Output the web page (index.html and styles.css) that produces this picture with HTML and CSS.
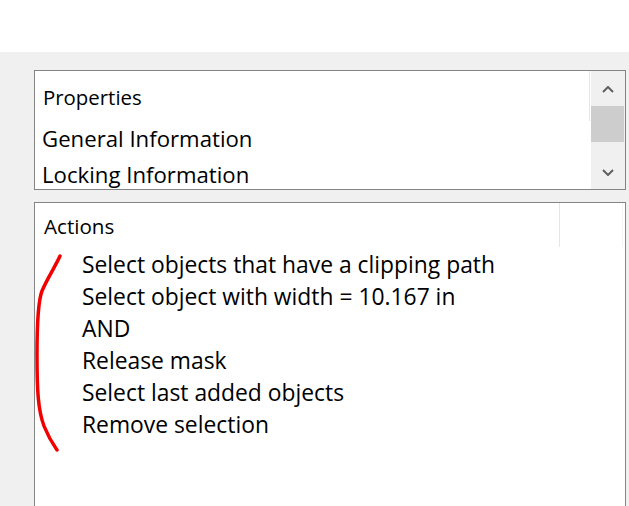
FILE: index.html
```html
<!DOCTYPE html>
<html>
<head>
<meta charset="utf-8">
<link rel="stylesheet" href="styles.css">
</head>
<body>
<div class="top"></div>
<div class="panel">
  <div class="props">
    <div class="list">
      <div class="head">Properties</div>
      <div class="item">General Information</div>
      <div class="item">Locking Information</div>
    </div>
    <div class="scrollbar">
      <div class="btn">
        <svg width="12" height="7" viewBox="0 0 12 7"><polyline points="1,6 6,1 11,6" fill="none" stroke="#606060" stroke-width="2"/></svg>
      </div>
      <div class="thumb"></div>
      <div class="track"></div>
      <div class="btn">
        <svg width="12" height="7" viewBox="0 0 12 7"><polyline points="1,1 6,6 11,1" fill="none" stroke="#606060" stroke-width="2"/></svg>
      </div>
    </div>
  </div>
  <div class="actions">
    <div class="ahead">
      <div class="acol">Actions</div>
      <div class="acol2"></div>
    </div>
    <div class="alist">
      <div class="aitem">Select objects that have a clipping path</div>
      <div class="aitem">Select object with width = 10.167 in</div>
      <div class="aitem">AND</div>
      <div class="aitem">Release mask</div>
      <div class="aitem">Select last added objects</div>
      <div class="aitem">Remove selection</div>
    </div>
  </div>
</div>
<svg class="mark" width="629" height="506" viewBox="0 0 629 506">
  <path d="M60 256 C55 267 47 279 42 291 C38 301 37 320 37 355 C37 390 38 410 44 426 C48 436 52 443 57 450" fill="none" stroke="#f20000" stroke-width="3.5" stroke-linecap="round"/>
</svg>
</body>
</html>
```
FILE: styles.css
```css
html, body {
  margin: 0;
  padding: 0;
  height: 506px;
  overflow: hidden;
  background: #ffffff;
}
body {
  position: relative;
  font-family: "Open Sans", "Noto Sans", sans-serif;
  color: #000;
}
.top {
  height: 52px;
  background: #ffffff;
}
.panel {
  background: #f0f0f0;
  height: 454px;
  padding: 18px 3px 0 34px;
  box-sizing: border-box;
  display: flex;
  flex-direction: column;
}
.props {
  height: 120px;
  box-sizing: border-box;
  border: 1px solid #848484;
  background: #fff;
  display: flex;
  flex-shrink: 0;
}
.list {
  flex: 1;
  overflow: hidden;
}
.head {
  width: 555px;
  box-sizing: border-box;
  border-right: 1px solid #e5e5e5;
  font-size: 20.4px;
  line-height: 32px;
  padding: 10px 0 8px 8px;
  white-space: nowrap;
}
.item {
  font-size: 22.2px;
  line-height: 36px;
  padding-left: 7px;
  white-space: nowrap;
}
.scrollbar {
  width: 34px;
  background: #f0f0f0;
  display: flex;
  flex-direction: column;
}
.btn {
  height: 35px;
  display: flex;
  align-items: center;
  justify-content: center;
}
.btn:first-child {
  height: 35px;
  padding-top: 2px;
  box-sizing: border-box;
}
.btn:last-child {
  height: 34px;
}
.thumb {
  height: 36px;
  background: #cdcdcd;
  margin-right: 1px;
}
.track {
  flex: 1;
}
.actions {
  margin-top: 12px;
  flex: 1;
  border: 1px solid #848484;
  border-bottom: none;
  background: #fff;
}
.ahead {
  display: flex;
  height: 44px;
}
.acol {
  width: 525px;
  box-sizing: border-box;
  border-right: 1px solid #e5e5e5;
  font-size: 20.6px;
  line-height: 32px;
  padding: 7px 0 5px 9px;
}
.acol2 {
  width: 63px;
  box-sizing: border-box;
  border-right: 1px solid #f4f4f4;
}
.alist {
  padding: 2px 0 0 47px;
}
.aitem {
  font-size: 22.85px;
  line-height: 32px;
  white-space: nowrap;
}
.mark {
  position: absolute;
  left: 0;
  top: 0;
  pointer-events: none;
}
```
